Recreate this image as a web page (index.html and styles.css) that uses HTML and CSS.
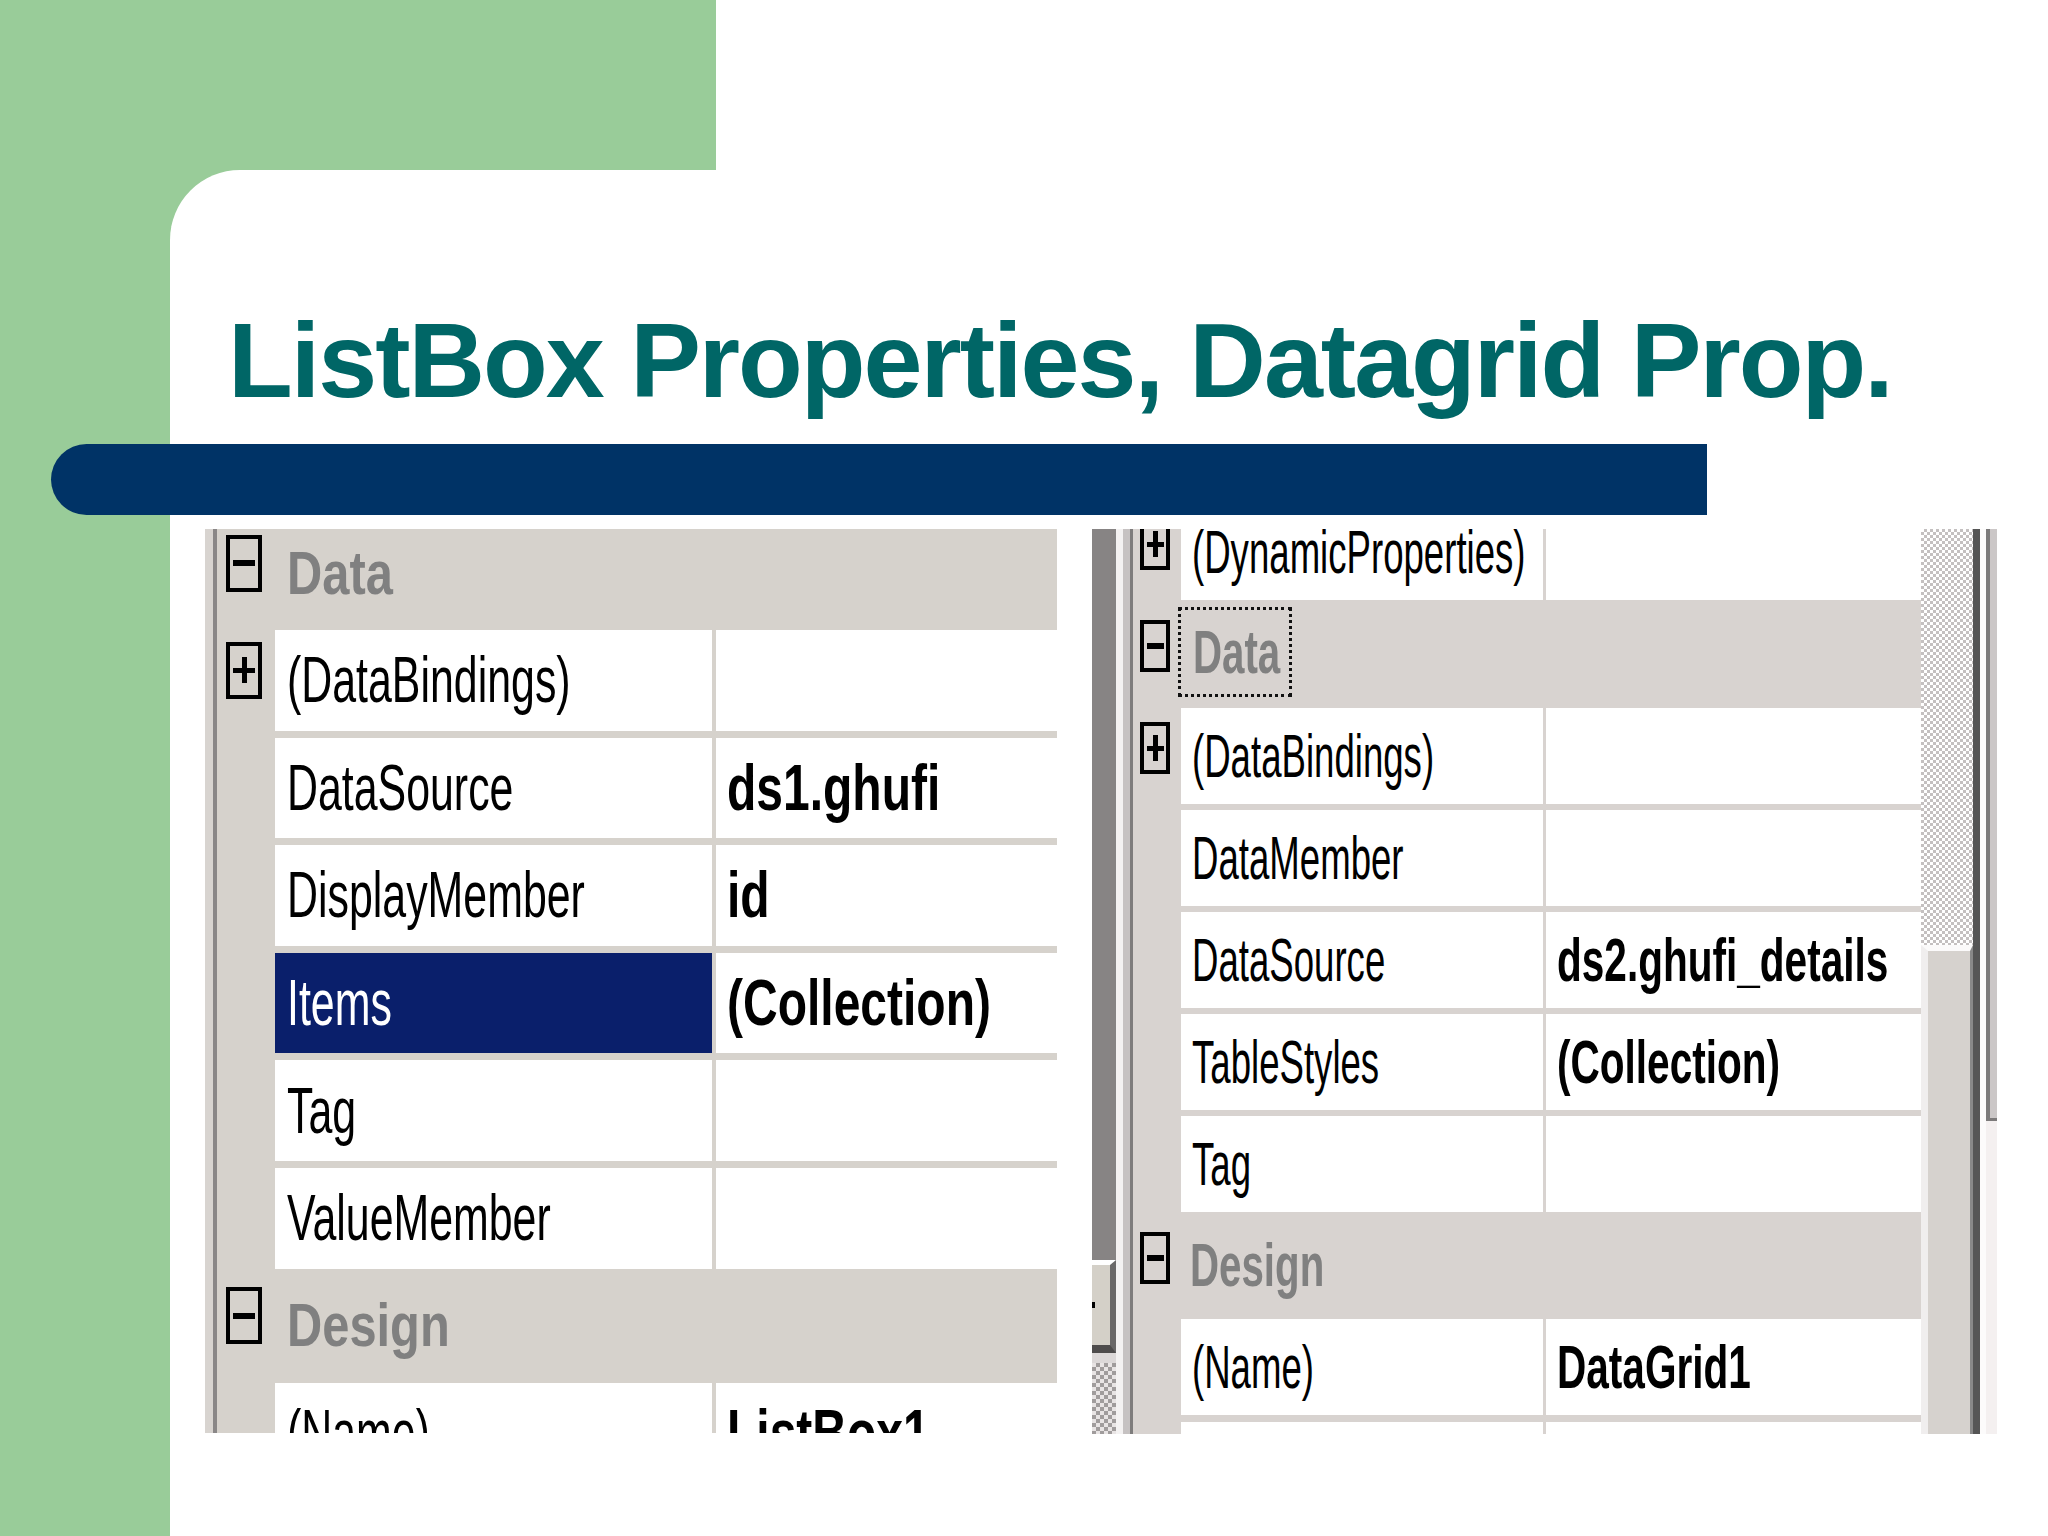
FILE: index.html
```html
<!DOCTYPE html>
<html>
<head>
<meta charset="utf-8">
<title>ListBox Properties, Datagrid Prop.</title>
<link rel="stylesheet" href="styles.css">
</head>
<body>
<div class="slide">
  <div class="top-band"></div>
  <div class="main">
    <div class="card">
      <h1 class="title">ListBox Properties, Datagrid Prop.</h1>
      <div class="rule"></div>
      <div class="shots">
        <div class="pl">
          <div class="edge1"></div>
          <div class="edge2"></div>
          <div class="rows">
            <div class="row cat first"><div class="m"><span class="box"></span></div><div class="lbl"><span class="th">Data</span></div></div>
            <div class="row prop sep"><div class="m"><span class="box plus"></span></div><div class="cell n"><span class="t">(DataBindings)</span></div><div class="cell v"></div></div>
            <div class="row prop sep"><div class="m"></div><div class="cell n"><span class="t">DataSource</span></div><div class="cell v"><span class="tb">ds1.ghufi</span></div></div>
            <div class="row prop sep"><div class="m"></div><div class="cell n"><span class="t">DisplayMember</span></div><div class="cell v"><span class="tb">id</span></div></div>
            <div class="row prop sep"><div class="m"></div><div class="cell n sel"><span class="t">Items</span></div><div class="cell v"><span class="tb">(Collection)</span></div></div>
            <div class="row prop sep"><div class="m"></div><div class="cell n"><span class="t">Tag</span></div><div class="cell v"></div></div>
            <div class="row prop"><div class="m"></div><div class="cell n"><span class="t">ValueMember</span></div><div class="cell v"></div></div>
            <div class="row cat"><div class="m"><span class="box"></span></div><div class="lbl"><span class="th">Design</span></div></div>
            <div class="row prop"><div class="m"></div><div class="cell n"><span class="t">(Name)</span></div><div class="cell v"><span class="tb">ListBox1</span></div></div>
          </div>
        </div>
        <div class="pr">
          <div class="sbl">
            <div class="dk"></div>
            <div class="btn"></div>
            <div class="gp"></div>
            <div class="ck"></div>
          </div>
          <div class="e1"></div>
          <div class="e2"></div>
          <div class="e3"></div>
          <div class="rows">
            <div class="row prop first"><div class="m"><span class="box plus"></span></div><div class="cell n"><span class="t">(DynamicProperties)</span></div><div class="cell v"></div></div>
            <div class="row cat data"><div class="m"><span class="box"></span></div><div class="lbl"><span class="focus"><span class="th">Data</span></span></div></div>
            <div class="row prop sep"><div class="m"><span class="box plus"></span></div><div class="cell n"><span class="t">(DataBindings)</span></div><div class="cell v"></div></div>
            <div class="row prop sep"><div class="m"></div><div class="cell n"><span class="t">DataMember</span></div><div class="cell v"></div></div>
            <div class="row prop sep"><div class="m"></div><div class="cell n"><span class="t">DataSource</span></div><div class="cell v"><span class="tb">ds2.ghufi_details</span></div></div>
            <div class="row prop sep"><div class="m"></div><div class="cell n"><span class="t">TableStyles</span></div><div class="cell v"><span class="tb">(Collection)</span></div></div>
            <div class="row prop"><div class="m"></div><div class="cell n"><span class="t">Tag</span></div><div class="cell v"></div></div>
            <div class="row cat design"><div class="m"><span class="box"></span></div><div class="lbl"><span class="th">Design</span></div></div>
            <div class="row prop sep7"><div class="m"></div><div class="cell n"><span class="t">(Name)</span></div><div class="cell v"><span class="tb">DataGrid1</span></div></div>
            <div class="row prop last"><div class="m"></div><div class="cell n"></div><div class="cell v"></div></div>
          </div>
          <div class="vs">
            <div class="trk"></div>
            <div class="thumb"></div>
          </div>
          <div class="e4"></div>
          <div class="e5"></div>
          <div class="e6"><div class="up"></div><div class="lo"></div></div>
        </div>
      </div>
    </div>
  </div>
</div>
</body>
</html>
```
FILE: styles.css
```css
* { box-sizing: border-box; }
html, body { margin: 0; padding: 0; background: #fff; }
.slide {
  width: 2048px; height: 1536px; overflow: hidden; background: #fff;
  font-family: "Liberation Sans", Arial, sans-serif;
}
.top-band { height: 170px; background: linear-gradient(90deg, #99cc99 0 716px, #fff 716px); }
.main { display: flex; height: 1366px; padding-left: 170px; background: #99cc99; }
.card { flex: 1; background: #fff; border-top-left-radius: 70px; padding: 137px 0 0 58px; }
.title {
  margin: 0; height: 106px; font-size: 106px; line-height: 106px; font-weight: bold;
  color: #006666; letter-spacing: -2px; white-space: nowrap;
}
.rule {
  margin: 31px 0 0 -177px; width: 1656px; height: 71px; background: #003366;
  border-radius: 36px 0 0 36px;
}
.shots { display: flex; align-items: flex-start; gap: 35px; margin: 14px 0 0 -23px; }

/* shared property grid parts */
.rows { display: flex; flex-direction: column; flex: none; }
.row { display: flex; flex: none; align-items: stretch; }
.m { flex: none; display: flex; align-items: center; }
.cell { flex: none; display: flex; align-items: center; white-space: nowrap; background: #fff; }
.v { flex: 1; }
.lbl { display: flex; align-items: center; white-space: nowrap; }
.t, .tb, .th { display: inline-block; line-height: 1; transform-origin: 0 50%; color: #000; }
.tb, .th { font-weight: bold; }
.th { color: #808080; }
.box {
  flex: none; border: 4px solid #000; display: flex; align-items: center; justify-content: center;
}
.box::before {
  content: ""; display: block;
  background: linear-gradient(#000, #000) center / 100% 6px no-repeat;
}
.box.plus::before {
  background:
    linear-gradient(#000, #000) center / 100% 5px no-repeat,
    linear-gradient(#000, #000) center / 5px 100% no-repeat;
}

/* left grid (ListBox) */
.pl { width: 852px; height: 904px; overflow: hidden; display: flex; flex: none; }
.pl .edge1 { width: 8px; flex: none; background: #d8d4d0; }
.pl .edge2 { width: 4px; flex: none; background: #8a8787; }
.pl .rows { width: 840px; background: #d6d2cc; }
.pl .prop { height: 100.6px; }
.pl .sep { margin-bottom: 7px; }
.pl .cat { height: 114px; }
.pl .first { margin-top: -13px; }
.pl .m { width: 58px; }
.pl .n { width: 437px; margin-right: 4px; padding-left: 12px; }
.pl .v { padding-left: 11px; }
.pl .lbl { padding-left: 12px; }
.pl .box { width: 36px; height: 57px; margin: 0 0 20px 9px; }
.pl .box::before { width: 22px; height: 26px; }
.pl .t { font-size: 64px; transform: scaleX(0.67); }
.pl .tb { font-size: 64px; transform: scaleX(0.75); }
.pl .th { font-size: 61px; transform: scaleX(0.8); }
.pl .sel { background: #0a1f6b; }
.pl .sel .t { color: #fff; }

/* right grid (DataGrid) */
.pr { width: 905px; height: 905px; overflow: hidden; display: flex; flex: none; }
.sbl { width: 24px; flex: none; display: flex; flex-direction: column; }
.sbl .dk { flex: 1; background: #878484; }
.sbl .btn {
  flex: none; height: 93px; background: #d4d0c8; border-top: 5px solid #fff;
  border-right: 6px solid #6a6868; border-bottom: 8px solid #4e4c4c;
  display: flex; align-items: center;
}
.sbl .btn::before { content: ""; display: block; width: 3px; height: 6px; background: #000; }
.sbl .gp { flex: none; height: 10px; background: #dcd8d8; }
.sbl .ck {
  flex: none; height: 71px;
  background: repeating-conic-gradient(#a09c9c 0 25%, #e8e4e4 0 50%) 0 0 / 8px 8px;
}
.e1 { width: 7px; flex: none; background: #f4f2f2; }
.e2 { width: 7px; flex: none; background: #c6c2c2; }
.e3 { width: 3px; flex: none; background: #7e7c7c; }
.pr .rows { width: 788px; background: #d8d3d0; }
.pr .prop { height: 96px; }
.pr .sep { margin-bottom: 6px; }
.pr .sep7 { margin-bottom: 7px; }
.pr .first { margin-top: -25px; }
.pr .data { height: 108px; }
.pr .design { height: 107px; }
.pr .m { width: 48px; }
.pr .n { width: 362px; margin-right: 3px; padding-left: 11px; }
.pr .v { padding-left: 11px; }
.pr .lbl { padding-left: 9px; }
.pr .data .lbl { padding-left: 0; }
.pr .box { width: 30px; height: 52px; margin: 0 0 16px 7px; }
.pr .box::before { width: 17px; height: 26px; }
.pr .t { font-size: 61px; transform: scaleX(0.6); }
.pr .tb { font-size: 61px; transform: scaleX(0.665); }
.pr .th { font-size: 61px; transform: scaleX(0.66); }
.focus {
  width: 114px; height: 90px; margin: 0 0 4px -3px; border: 3px dotted #111;
  padding-left: 12px; display: flex; align-items: center;
}
.vs { width: 52px; flex: none; display: flex; flex-direction: column; }
.vs .trk {
  flex: none; height: 416px;
  background: repeating-conic-gradient(#c4c0c0 0 25%, #fff 0 50%) 0 0 / 6px 6px;
}
.vs .thumb {
  flex: 1; background: #d6d2ce; border-top: 6px solid #fbfafa;
  border-left: 7px solid #f0eeee; border-right: 3px solid #888;
}
.e4 { width: 7px; flex: none; background: #555; }
.e5 { width: 6px; flex: none; background: #fcfbfb; }
.e6 { width: 11px; flex: none; display: flex; flex-direction: column; }
.e6 .up { flex: none; height: 592px; background: #cbc7c7; border-left: 4px solid #7c7a7a; border-bottom: 3px solid #7c7a7a; }
.e6 .lo { flex: 1; background: #f4f0f0; }
```
